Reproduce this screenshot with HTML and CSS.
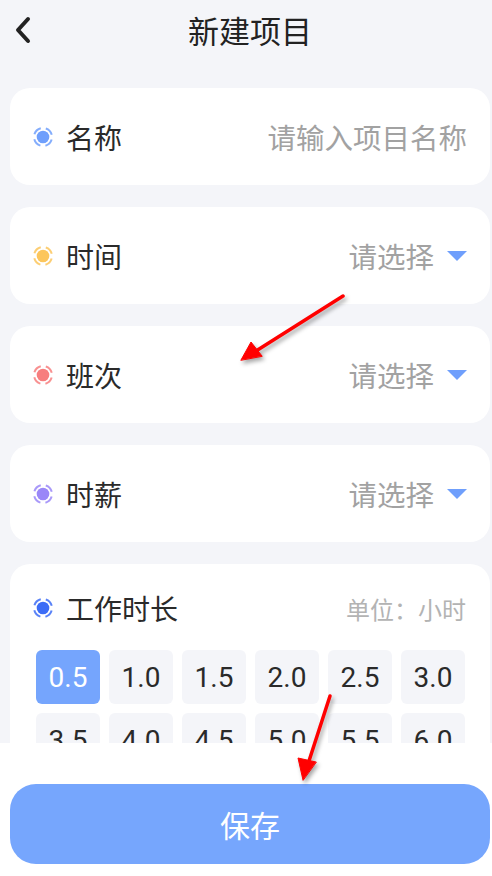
FILE: index.html
```html
<!DOCTYPE html>
<html lang="zh-CN">
<head>
    <meta charset="UTF-8">
    <meta name="viewport" content="width=device-width, initial-scale=1.0">
    <link rel="stylesheet" href="styles.css">
</head>
<body>
    <div class="page">
        <header class="header">
            <a class="back" href="#">
                <svg width="20" height="28" viewBox="0 0 20 28"><path d="M15 3 L5 14 L15 25" fill="none" stroke="#222" stroke-width="4" stroke-linecap="round" stroke-linejoin="round"/></svg>
            </a>
            <div class="title">新建项目</div>
            <div></div>
        </header>

        <div class="content">
            <div class="card">
                <div class="row">
                    <svg class="dot blue" viewBox="0 0 22 22"><circle class="ring" cx="11" cy="11" r="9"/><circle cx="11" cy="11" r="6.3"/></svg>
                    <span class="label">名称</span>
                    <span class="hint">请输入项目名称</span>
                </div>
            </div>
            <div class="card">
                <div class="row">
                    <svg class="dot yellow" viewBox="0 0 22 22"><circle class="ring" cx="11" cy="11" r="9"/><circle cx="11" cy="11" r="6.3"/></svg>
                    <span class="label">时间</span>
                    <span class="hint">请选择</span>
                    <span class="caret"></span>
                </div>
            </div>
            <div class="card">
                <div class="row">
                    <svg class="dot red" viewBox="0 0 22 22"><circle class="ring" cx="11" cy="11" r="9"/><circle cx="11" cy="11" r="6.3"/></svg>
                    <span class="label">班次</span>
                    <span class="hint">请选择</span>
                    <span class="caret"></span>
                </div>
            </div>
            <div class="card">
                <div class="row">
                    <svg class="dot purple" viewBox="0 0 22 22"><circle class="ring" cx="11" cy="11" r="9"/><circle cx="11" cy="11" r="6.3"/></svg>
                    <span class="label">时薪</span>
                    <span class="hint">请选择</span>
                    <span class="caret"></span>
                </div>
            </div>
            <div class="card card-hours">
                <div class="head">
                    <svg class="dot deep" viewBox="0 0 22 22"><circle class="ring" cx="11" cy="11" r="9"/><circle cx="11" cy="11" r="6.3"/></svg>
                    <span class="label">工作时长</span>
                    <span class="unit">单位：小时</span>
                </div>
                <div class="hours">
                    <button class="active">0.5</button>
                    <button>1.0</button>
                    <button>1.5</button>
                    <button>2.0</button>
                    <button>2.5</button>
                    <button>3.0</button>
                    <button>3.5</button>
                    <button>4.0</button>
                    <button>4.5</button>
                    <button>5.0</button>
                    <button>5.5</button>
                    <button>6.0</button>
                </div>
            </div>
        </div>

        <div class="footer">
            <button class="save">保存</button>
        </div>

        <svg class="marks" width="492" height="876" viewBox="0 0 492 876">
            <g fill="#f00" stroke="#f00" stroke-linecap="round">
                <line x1="343" y1="296" x2="256" y2="351" stroke-width="3.5"/>
                <polygon points="241,360 251,342 262,356" stroke-width="1"/>
                <line x1="330" y1="696" x2="308" y2="764" stroke-width="3.5"/>
                <polygon points="303,780 298,758 316,762" stroke-width="1"/>
            </g>
        </svg>
    </div>
</body>
</html>
```

FILE: styles.css
```css
body {
    margin: 0;
    padding: 0;
    background-color: #f4f5f9;
    font-family: "Noto Sans CJK SC", "Noto Sans", sans-serif;
    color: #333333;
}

.page {
    position: relative;
    height: 876px;
    display: flex;
    flex-direction: column;
    overflow: hidden;
}

.header {
    height: 60px;
    display: grid;
    grid-template-columns: 1fr auto 1fr;
    align-items: center;
    padding-left: 8px;
}

.back {
    display: flex;
    align-items: center;
    padding-left: 5px;
}

.title {
    font-size: 31px;
    color: #222222;
    line-height: 60px;
}

.content {
    height: 683px;
    overflow: hidden;
    padding: 28px 0 0 10px;
    box-sizing: border-box;
}

.card {
    width: 480px;
    background-color: #ffffff;
    border-radius: 20px;
    margin-bottom: 22px;
}

.row {
    height: 97px;
    display: flex;
    align-items: center;
    padding: 0 23px 0 22px;
}

.dot {
    width: 22px;
    height: 22px;
    flex: none;
    margin-right: 12px;
    fill: currentColor;
}

.dot .ring {
    fill: none;
    stroke: currentColor;
    stroke-width: 2;
    stroke-dasharray: 9 5.14;
    stroke-dashoffset: -2.57;
    opacity: 0.85;
}

.blue { color: #6f9ffc; }
.yellow { color: #fcc65c; }
.red { color: #f77e7e; }
.purple { color: #9a87f8; }
.deep { color: #3c6cf6; }

.label {
    font-size: 28px;
    color: #2a2a2a;
    line-height: 32px;
}

.hint {
    margin-left: auto;
    font-size: 28.5px;
    color: #a2a2a2;
}

.caret {
    width: 0;
    height: 0;
    border-left: 10px solid transparent;
    border-right: 10px solid transparent;
    border-top: 10px solid #6f9ffc;
    margin-left: 13px;
}

.card-hours {
    padding: 28px 24px 30px 22px;
    box-sizing: border-box;
}

.head {
    display: flex;
    align-items: center;
    height: 32px;
}

.unit {
    margin-left: auto;
    font-size: 24px;
    color: #b3b3b3;
}

.hours {
    display: grid;
    grid-template-columns: repeat(6, 64px);
    gap: 9px;
    margin: 26px 0 0 4px;
}

.hours button {
    height: 54px;
    border: none;
    border-radius: 6px;
    background-color: #f4f5f9;
    color: #2a2a2a;
    font-family: Roboto, "Noto Sans", sans-serif;
    font-size: 28px;
    padding: 0;
}

.hours button.active {
    background-color: #75a5fd;
    color: #ffffff;
}

.footer {
    flex: 1;
    background-color: #ffffff;
    padding: 41px 0 0 10px;
}

.save {
    width: 480px;
    height: 80px;
    border: none;
    border-radius: 26px;
    background-color: #76a6fd;
    color: #ffffff;
    font-family: "Noto Sans CJK SC", sans-serif;
    font-size: 30px;
}

.marks {
    position: absolute;
    left: 0;
    top: 0;
    pointer-events: none;
    filter: drop-shadow(2px 3px 2px rgba(0, 0, 0, 0.35));
}
```
